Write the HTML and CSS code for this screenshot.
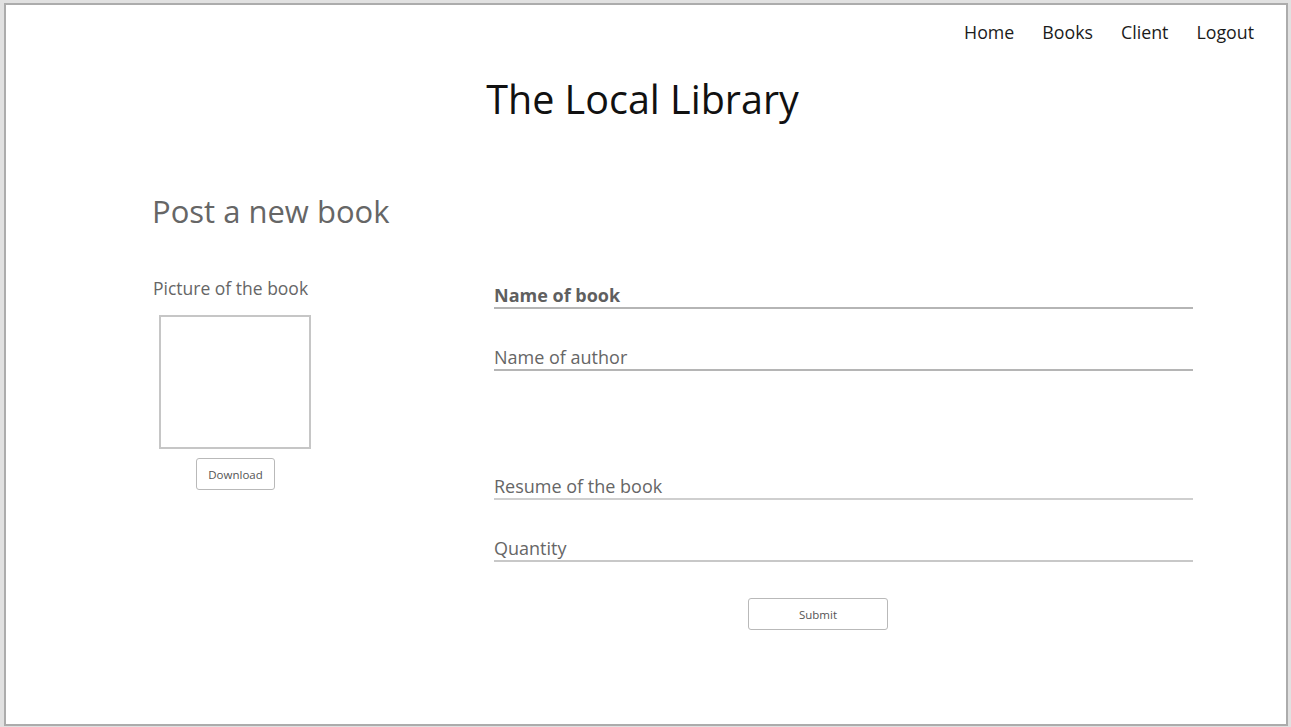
FILE: index.html
```html
<!DOCTYPE html>
<html>
<head>
<meta charset="utf-8">
<link rel="stylesheet" href="styles.css">
</head>
<body>
<div class="frame">
  <nav class="nav">
    <a href="#">Home</a>
    <a href="#">Books</a>
    <a href="#">Client</a>
    <a href="#">Logout</a>
  </nav>
  <h1 class="title">The Local Library</h1>
  <main class="content">
    <h2 class="page-heading">Post a new book</h2>
    <div class="form-area">
      <div class="picture-col">
        <div class="picture-label">Picture of the book</div>
        <div class="picture-box"></div>
        <button class="btn btn-download">Download</button>
      </div>
      <div class="fields-col">
        <div class="field field-book"><span>Name of book</span></div>
        <div class="field field-author"><span>Name of author</span></div>
        <div class="field field-resume"><span>Resume of the book</span></div>
        <div class="field field-qty"><span>Quantity</span></div>
        <div class="submit-row"><button class="btn btn-submit">Submit</button></div>
      </div>
    </div>
  </main>
</div>
</body>
</html>
```

FILE: styles.css
```css
html, body {
  margin: 0;
  padding: 0;
  background: #e1e1e1;
  height: 100%;
}
body {
  padding: 3px 3px 1px 4px;
  box-sizing: border-box;
  font-family: "Open Sans", "Noto Sans", sans-serif;
}
.frame {
  background: #fff;
  border: 2px solid #acacac;
  height: 100%;
  box-sizing: border-box;
}
.nav {
  display: flex;
  justify-content: flex-end;
  gap: 28px;
  padding: 15px 32px 0 0;
  height: 28px;
}
.nav a {
  color: #1b1b1b;
  text-decoration: none;
  font-size: 17.8px;
  line-height: 24px;
}
.title {
  margin: 23px 0 0;
  padding-right: 7px;
  text-align: center;
  font-weight: 400;
  font-size: 39.5px;
  line-height: 56px;
  color: #111;
}
.content {
  padding: 0 0 0 146px;
}
.page-heading {
  margin: 64px 0 0;
  font-weight: 400;
  font-size: 31px;
  line-height: 40px;
  color: #666;
}
.form-area {
  display: flex;
  margin-top: 45px;
}
.picture-col {
  width: 342px;
  display: flex;
  flex-direction: column;
}
.picture-label {
  font-size: 17.5px;
  line-height: 24px;
  color: #666;
  padding-left: 1px;
}
.picture-box {
  width: 148px;
  height: 130px;
  border: 2px solid #c6c6c6;
  margin: 15px 0 0 7px;
}
.btn {
  font-family: "Open Sans", "Noto Sans", sans-serif;
  background: #fff;
  border: 1px solid #b9b9b9;
  border-radius: 3px;
  color: #555;
  padding: 0;
  cursor: pointer;
}
.btn-download {
  width: 79px;
  height: 32px;
  font-size: 11.5px;
  margin: 9px 0 0 44px;
}
.fields-col {
  width: 699px;
  display: flex;
  flex-direction: column;
  padding-top: 7px;
}
.field {
  color: #666;
  font-size: 18px;
  line-height: 24px;
  border-bottom: 2px solid #b5b5b5;
  padding-bottom: 0;
  height: 24px;
}
.field-book {
  font-weight: 700;
  color: #5f5f5f;
}
.field-author {
  margin-top: 36px;
}
.field-resume {
  margin-top: 103px;
  border-bottom-color: #cfcfcf;
}
.field-qty {
  margin-top: 36px;
  border-bottom-color: #c8c8c8;
}
.submit-row {
  margin-top: 36px;
  padding-left: 254px;
}
.btn-submit {
  width: 140px;
  height: 32px;
  font-size: 11.5px;
}
```
